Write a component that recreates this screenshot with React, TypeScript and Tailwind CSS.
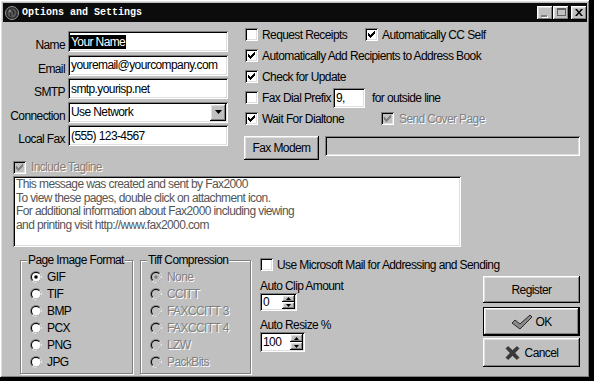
import React from "react";

const raised =
  "shadow-[inset_-1px_-1px_#000,inset_1px_1px_#fff,inset_-2px_-2px_#808080,inset_2px_2px_#dfdfdf]";
const sunken =
  "shadow-[inset_1px_1px_#808080,inset_-1px_-1px_#fff,inset_2px_2px_#000,inset_-2px_-2px_#dfdfdf]";
const disabledText = "text-[#808080] [text-shadow:1px_1px_0_#fff]";

function CheckBox({ checked = false, disabled = false }: { checked?: boolean; disabled?: boolean }) {
  return (
    <span
      className={`relative inline-block w-[13px] h-[13px] shrink-0 ${disabled ? "bg-[#c0c0c0]" : "bg-white"} ${sunken}`}
    >
      {checked && (
        <svg width="13" height="13" viewBox="0 0 13 13" className="absolute left-0 top-0">
          <path
            d="M3 5h1v3h-1zM4 6h1v3h-1zM5 7h1v3h-1zM6 6h1v3h-1zM7 5h1v3h-1zM8 4h1v3h-1zM9 3h1v3h-1z"
            fill={disabled ? "#808080" : "#000"}
          />
        </svg>
      )}
    </span>
  );
}

function Radio({ checked = false, disabled = false }: { checked?: boolean; disabled?: boolean }) {
  return (
    <svg width="12" height="12" viewBox="0 0 12 12" className="shrink-0">
      <circle cx="6" cy="6" r="6" fill="#808080" />
      <path d="M1.76 10.24A6 6 0 0 0 10.24 1.76Z" fill="#fff" />
      <circle cx="6" cy="6" r="5" fill="#000" />
      <path d="M2.46 9.54A5 5 0 0 0 9.54 2.46Z" fill="#dfdfdf" />
      <circle cx="6" cy="6" r="4" fill={disabled ? "#c0c0c0" : "#fff"} />
      {checked && <circle cx="6" cy="6" r="1.8" fill={disabled ? "#808080" : "#000"} />}
    </svg>
  );
}

function Row({ label, children }: { label: string; children: React.ReactNode }) {
  return (
    <div className="flex items-end">
      <span className="w-[62px] text-right whitespace-nowrap">{label}</span>
      <div className="ml-[3px]">{children}</div>
    </div>
  );
}

function Field({ children }: { children: React.ReactNode }) {
  return (
    <div className={`w-[160px] h-[21px] bg-white flex items-center pl-[2px] whitespace-nowrap ${sunken}`}>
      {children}
    </div>
  );
}

function SpinArrows() {
  return (
    <div className="flex flex-col w-[13px] h-full">
      <div className={`flex-1 bg-[#c0c0c0] flex items-center justify-center ${raised}`}>
        <svg width="5" height="3" viewBox="0 0 5 3">
          <path d="M2.5 0L5 3H0z" fill="#000" />
        </svg>
      </div>
      <div className={`flex-1 bg-[#c0c0c0] flex items-center justify-center ${raised}`}>
        <svg width="5" height="3" viewBox="0 0 5 3">
          <path d="M0 0h5L2.5 3z" fill="#000" />
        </svg>
      </div>
    </div>
  );
}

function Radios({ items, selected, disabled = false }: { items: string[]; selected: number; disabled?: boolean }) {
  return (
    <div className="flex flex-col pt-[1px] pl-[9px]">
      {items.map((it, i) => (
        <div key={it} className="h-[17px] flex items-center">
          <Radio checked={i === selected} disabled={disabled} />
          <span className={`ml-[5px] ${disabled ? disabledText : ""}`}>{it}</span>
        </div>
      ))}
    </div>
  );
}

export default function App() {
  return (
    <div className="w-[594px] h-[381px] bg-black font-['Liberation_Sans',Arial,sans-serif] text-[12px] leading-[14px] tracking-[-0.6px] text-black">
      <div className={`w-[590px] h-[378px] bg-[#c0c0c0] p-[3px] flex flex-col ${raised}`}>
        {/* title bar */}
        <div className="h-[19px] bg-[#0c0c0c] flex items-center shrink-0">
          <svg width="14" height="14" viewBox="0 0 14 14" className="ml-[2px]">
            <circle cx="7" cy="7" r="6.5" fill="#2a2a2a" stroke="#9a9a9a" strokeWidth="1" />
            <circle cx="7" cy="7" r="4.5" fill="#5a5a5a" />
            <path d="M4 5c1.5-1 3-1 4 0s1 2.5 0 3.5M6 3.5c-1 1.5-1 5 0 7" stroke="#262626" strokeWidth="1.2" fill="none" />
            <circle cx="5" cy="5" r="1.2" fill="#8a8a8a" />
          </svg>
          <span className="ml-[3px] font-['Liberation_Mono',monospace] text-[10px] font-bold tracking-normal text-white">
            Options and Settings
          </span>
          <div className="ml-auto flex items-center">
            <div className={`w-[16px] h-[14px] bg-[#c0c0c0] flex items-end pl-[4px] pb-[3px] ${raised}`}>
              <div className="w-[6px] h-[2px] bg-[#808080] shadow-[1px_1px_0_#fff]" />
            </div>
            <div className={`w-[16px] h-[14px] bg-[#c0c0c0] flex items-center justify-center ${raised}`}>
              <div className="w-[9px] h-[8px] border border-[#606060] border-t-2 mb-[1px]" />
            </div>
            <div className={`ml-[2px] w-[16px] h-[14px] bg-[#c0c0c0] flex items-center justify-center ${raised}`}>
              <svg width="8" height="7" viewBox="0 0 8 7" className="mb-[1px]">
                <path d="M0 0h2l2 2.5L6 0h2L5 3.5L8 7H6L4 4.5L2 7H0l3-3.5z" fill="#000" />
              </svg>
            </div>
          </div>
        </div>

        {/* top section */}
        <div className="flex items-start h-[138px] shrink-0">
          <div className="w-[225px] pt-[9px] flex flex-col gap-[2.5px]">
            <Row label="Name">
              <Field>
                <span className="bg-black text-white px-[1px] leading-[14px]">Your Name</span>
              </Field>
            </Row>
            <Row label="Email">
              <Field>
                <span className="pl-[1px]">youremail@yourcompany.com</span>
              </Field>
            </Row>
            <Row label="SMTP">
              <Field>
                <span className="pl-[1px]">smtp.yourisp.net</span>
              </Field>
            </Row>
            <Row label="Connection">
              <div className={`w-[160px] h-[21px] bg-white flex items-center pl-[3px] pr-[2px] ${sunken}`}>
                <span className="flex-1">Use Network</span>
                <div className={`w-[16px] h-[17px] bg-[#c0c0c0] flex items-center justify-center ${raised}`}>
                  <svg width="7" height="4" viewBox="0 0 7 4">
                    <path d="M0 0h7L3.5 4z" fill="#000" />
                  </svg>
                </div>
              </div>
            </Row>
            <Row label="Local Fax">
              <Field>
                <span className="pl-[1px]">(555) 123-4567</span>
              </Field>
            </Row>
          </div>

          <div className="ml-[16px] w-[336px] pt-[2px] flex flex-col whitespace-nowrap">
            <div className="h-[21px] flex items-center">
              <div className="w-[121px] pl-[1px] flex items-center">
                <CheckBox />
                <span className="ml-[4px]">Request Receipts</span>
              </div>
              <CheckBox checked />
              <span className="ml-[4px]">Automatically CC Self</span>
            </div>
            <div className="h-[21px] flex items-center pl-[1px]">
              <CheckBox checked />
              <span className="ml-[4px]">Automatically Add Recipients to Address Book</span>
            </div>
            <div className="h-[21px] flex items-center pl-[1px]">
              <CheckBox checked />
              <span className="ml-[4px]">Check for Update</span>
            </div>
            <div className="h-[21px] flex items-center">
              <div className="w-[89px] pl-[1px] flex items-center">
                <CheckBox />
                <span className="ml-[4px]">Fax Dial Prefix</span>
              </div>
              <div className={`w-[32px] h-[20px] bg-white flex items-center pl-[3px] ${sunken}`}>9,</div>
              <span className="ml-[7px]">for outside line</span>
            </div>
            <div className="h-[21px] flex items-center">
              <div className="w-[137px] pl-[1px] flex items-center">
                <CheckBox checked />
                <span className="ml-[4px]">Wait For Dialtone</span>
              </div>
              <CheckBox checked disabled />
              <span className={`ml-[5px] ${disabledText}`}>Send Cover Page</span>
            </div>
            <div className="mt-[7px] flex items-start">
              <button className={`w-[75px] h-[24px] bg-[#c0c0c0] flex items-center justify-center ${raised}`}>
                Fax Modem
              </button>
              <div className={`ml-[6px] w-[255px] h-[20px] bg-[#c0c0c0] ${sunken}`} />
            </div>
          </div>
        </div>

        {/* tagline */}
        <div className="h-[14px] flex items-center ml-[10px] shrink-0">
          <CheckBox checked disabled />
          <span className={`ml-[5px] ${disabledText}`}>Include Tagline</span>
        </div>
        <div
          className={`mt-[2px] ml-[10px] w-[448px] h-[71px] bg-white pl-[3px] pt-[2px] text-[#555] leading-[13.5px] shrink-0 ${sunken}`}
        >
          <div>This message was created and sent by Fax2000</div>
          <div>To view these pages, double click on attachment icon.</div>
          <div>For additional information about Fax2000 including viewing</div>
          <div>and printing visit http://www.fax2000.com</div>
        </div>

        {/* bottom section */}
        <div className="flex items-start">
          <fieldset className="ml-[17px] mt-[6px] w-[113px] h-[121px] border border-[#808080] shadow-[1px_1px_0_#fff,inset_1px_1px_0_#fff]">
            <legend className="ml-[6px] px-[1px] bg-[#c0c0c0] leading-[14px]">Page Image Format</legend>
            <Radios items={["GIF", "TIF", "BMP", "PCX", "PNG", "JPG"]} selected={0} />
          </fieldset>
          <fieldset className="ml-[7px] mt-[6px] w-[111px] h-[121px] border border-[#808080] shadow-[1px_1px_0_#fff,inset_1px_1px_0_#fff]">
            <legend className="ml-[6px] px-[1px] bg-[#c0c0c0] leading-[14px]">Tiff Compression</legend>
            <Radios
              items={["None", "CCITT", "FAXCCITT 3", "FAXCCITT 4", "LZW", "PackBits"]}
              selected={0}
              disabled
            />
          </fieldset>

          <div className="ml-[9px] w-[223px] mt-[11px] flex flex-col whitespace-nowrap">
            <div className="h-[13px] flex items-center">
              <CheckBox />
              <span className="ml-[4px]">Use Microsoft Mail for Addressing and Sending</span>
            </div>
            <span className="mt-[9px] leading-[13px]">Auto Clip Amount</span>
            <div className={`w-[37px] h-[18px] bg-white flex items-stretch pl-[3px] p-[2px] ${sunken}`}>
              <span className="flex-1 self-center">0</span>
              <SpinArrows />
            </div>
            <span className="mt-[8px] leading-[13px]">Auto Resize %</span>
            <div className={`w-[45px] h-[20px] bg-white flex items-stretch pl-[3px] p-[2px] ${sunken}`}>
              <span className="flex-1 self-center">100</span>
              <SpinArrows />
            </div>
          </div>

          <div className="w-[97px] mt-[29px] flex flex-col">
            <button className={`h-[27px] bg-[#c0c0c0] flex items-center justify-center ${raised}`}>Register</button>
            <div className="mt-[4px] h-[29px] border border-black">
              <button className={`w-full h-full bg-[#c0c0c0] flex items-center justify-center ${raised}`}>
                <svg width="22" height="16" viewBox="0 0 22 16" className="mr-[2px]">
                  <path d="M1 9l3-3 5 4L19 1l2 2L9 15z" fill="#8a8a8a" stroke="#2a2a2a" strokeWidth="1" strokeLinejoin="round" />
                </svg>
                <span>OK</span>
              </button>
            </div>
            <button className={`mt-[2px] h-[29px] bg-[#c0c0c0] flex items-center justify-center ${raised}`}>
              <svg width="15" height="14" viewBox="0 0 15 14" className="mr-[5px]">
                <path d="M1 2.5L3 0.5l4.5 4 4.5-4 2 2-4.3 4.5 4.3 4.5-2 2-4.5-4-4.5 4-2-2 4.3-4.5z" fill="#3a3a3a" stroke="#1a1a1a" strokeWidth="0.6" />
              </svg>
              <span>Cancel</span>
            </button>
          </div>
        </div>
      </div>
    </div>
  );
}
